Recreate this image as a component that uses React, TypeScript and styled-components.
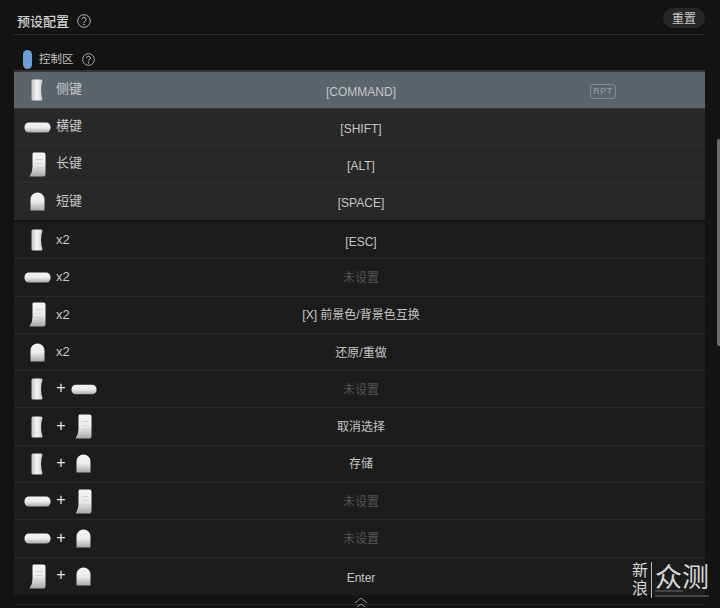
import * as React from 'react';
import styled, {createGlobalStyle} from 'styled-components';

const GlobalStyle = createGlobalStyle`
    html, body {
        margin: 0;
        padding: 0;
        background: #131313;
    }
    body {
        font-family: "Liberation Sans", "Noto Sans CJK SC", sans-serif;
    }
`;

const Page = styled.div`
    position: relative;
    width: 720px;
    height: 608px;
    overflow: hidden;
    padding: 0 15px 0 14px;
    box-sizing: border-box;
    background: #131313;
`;

const Header = styled.div`
    display: flex;
    align-items: center;
    height: 35px;
    padding: 7px 0 0 3px;
    box-sizing: border-box;
    border-bottom: 1px solid #2b2b2b;
`;

const Title = styled.div`
    font-size: 13px;
    font-weight: 500;
    color: #d4d4d4;
    margin-right: 8px;
`;

const ResetButton = styled.div`
    margin-left: auto;
    width: 42px;
    height: 20px;
    border-radius: 10px;
    background: #272727;
    color: #c8c8c8;
    font-size: 12px;
    display: flex;
    align-items: center;
    justify-content: center;
    margin-top: -6px;
`;

const SubHeader = styled.div`
    display: flex;
    align-items: center;
    height: 35px;
    padding: 13px 0 0 9px;
    box-sizing: border-box;
`;

const ZonePill = styled.div`
    width: 9px;
    height: 19px;
    border-radius: 4.5px;
    background: #6b9fd6;
    margin-right: 7px;
`;

const ZoneName = styled.div`
    font-size: 11.5px;
    color: #c4c4c4;
    margin-right: 8px;
    margin-top: -2px;
`;

const Group = styled.div<{$primary?: boolean}>`
    display: flex;
    flex-direction: column;
    background: ${({$primary}) => ($primary ? '#282828' : '#1c1c1c')};
    border-top: ${({$primary}) => ($primary ? '2px solid #333' : '2px solid #141414')};
`;

const Row = styled.div<{$active?: boolean; $separator: string; $height: number}>`
    display: grid;
    grid-template-columns: 230px 1fr 230px;
    align-items: center;
    height: ${({$height}) => $height}px;
    box-sizing: border-box;
    background: ${({$active}) => ($active ? '#5a6569' : 'transparent')};
    border-bottom: 1px solid ${({$separator}) => $separator};
    &:last-child {
        border-bottom: none;
    }
`;

const Trigger = styled.div`
    display: flex;
    align-items: center;
    height: 100%;
`;

const KeySlot = styled.div`
    width: 42px;
    padding-left: 4px;
    box-sizing: border-box;
    display: flex;
    justify-content: center;
    flex: none;
`;

const Label = styled.div<{$lift: number}>`
    padding-bottom: ${({$lift}) => $lift}px;
    font-size: 13px;
    color: #c9c9c9;
`;

const Plus = styled.div`
    font-size: 16px;
    width: 10px;
    text-align: center;
    color: #e4e4e4;
    line-height: 16px;
    margin-top: -2px;
    margin-right: 5px;
`;

const SecondKey = styled.div<{$narrow: boolean}>`
    width: 26px;
    box-sizing: border-box;
    padding-right: ${({$narrow}) => ($narrow ? 2 : 0)}px;
    display: flex;
    justify-content: center;
`;

const Action = styled.div<{$empty?: boolean; $latin?: boolean}>`
    text-align: center;
    padding: ${({$latin}) => ($latin ? '3px 0 0 3px' : '0 0 2px 3px')};
    font-size: 12px;
    color: ${({$empty}) => ($empty ? '#555' : '#c6c6c6')};
`;

const Flags = styled.div`
    padding: 2px 0 0 115px;
`;

const Repeat = styled.span`
    display: block;
    width: 26px;
    height: 15px;
    line-height: 13px;
    box-sizing: border-box;
    border: 1px solid #838c90;
    border-radius: 3px;
    text-align: center;
    font-size: 9px;
    letter-spacing: 0.5px;
    color: #98a1a4;
`;

const Footer = styled.div`
    height: 14px;
    position: relative;
`;

const FooterLine = styled.div`
    position: absolute;
    left: 1px;
    right: 0;
    top: 9px;
    height: 1px;
    background: #2b2b2b;
`;

const Chevron = styled.svg`
    position: absolute;
    left: 340px;
    top: 2px;
`;

const Scrollbar = styled.div`
    position: absolute;
    right: 0;
    top: 139px;
    width: 3px;
    height: 207px;
    border-radius: 2px 0 0 2px;
    background: #6c6c6c;
`;

const Watermark = styled.div`
    position: absolute;
    left: 632px;
    top: 562px;
    display: flex;
    color: #d8d8d8;
`;

const BrandSmall = styled.div`
    width: 17px;
    font-size: 16px;
    line-height: 18px;
    border-right: 1px solid #bbb;
    padding-right: 2px;
    height: 36px;
`;

const BrandLarge = styled.div`
    position: relative;
    margin-left: 3px;
    padding-top: 3px;
    font-size: 27px;
    line-height: 27px;
    white-space: nowrap;
    width: 54px;
    height: 30px;
    border-bottom: 2px solid #444;
    &::after {
        content: '';
        position: absolute;
        left: 0;
        bottom: 3px;
        width: 28px;
        height: 2px;
        background: #444;
    }
`;

const HelpIcon = ({size}: {size: number}) => (
    <svg width={size} height={size} viewBox="0 0 14 14">
        <circle cx="7" cy="7" r="6.3" fill="none" stroke="#c4c4c4" strokeWidth="0.9" />
        <path d="M5 5.4a2 2 0 1 1 3.1 1.7c-.7.4-1.1.8-1.1 1.6" fill="none" stroke="#d0d0d0" strokeWidth="1" />
        <circle cx="7" cy="10.5" r="0.7" fill="#d0d0d0" />
    </svg>
);

const KeyGradient = ({id, horizontal}: {id: string; horizontal?: boolean}) => (
    <defs>
        <linearGradient id={id} x1="0" y1="0" x2={horizontal ? '1' : '0'} y2={horizontal ? '0' : '1'}>
            <stop offset="0" stopColor={horizontal ? '#c4c4c4' : '#f4f4f4'} />
            <stop offset="0.5" stopColor={horizontal ? '#f5f5f5' : '#ececec'} />
            <stop offset="1" stopColor={horizontal ? '#c8c8c8' : '#a9a9a9'} />
        </linearGradient>
    </defs>
);

type KeyKind = 'side' | 'wide' | 'long' | 'short';

const Key = ({kind}: {kind: KeyKind}) => {
    if (kind === 'side') {
        return (
            <svg width="12" height="22" viewBox="0 0 12 22">
                <KeyGradient id="side-key" horizontal />
                <path d="M2 .5H10Q11.5.5 11.5 2Q10 6 10 11Q10 16 11.5 20Q11.5 21.5 10 21.5H2Q.5 21.5.5 20V2Q.5.5 2 .5Z" fill="url(#side-key)" />
            </svg>
        );
    }
    if (kind === 'wide') {
        return (
            <svg width="27" height="11" viewBox="0 0 27 11">
                <KeyGradient id="wide-key" />
                <rect x="0.5" y="0.5" width="26" height="10" rx="4.5" fill="url(#wide-key)" />
            </svg>
        );
    }
    if (kind === 'long') {
        return (
            <svg width="17" height="25" viewBox="0 0 17 25">
                <KeyGradient id="long-key" />
                <path d="M4.5.5H14.5Q16.5.5 16.5 2.5V22.5Q16.5 24.5 14.5 24.5H.5Q3.5 20 3.5 15V2Q3.5.5 4.5.5Z" fill="url(#long-key)" />
                <path d="M6.5 7.5H13.5M6.5 11.5H13.5M6.5 15.5H13.5" stroke="#d2d2d2" strokeWidth="1" />
            </svg>
        );
    }
    return (
        <svg width="15" height="19" viewBox="0 0 15 19">
            <KeyGradient id="short-key" />
            <path d="M.5 18.5V7.5A7 7 0 0 1 14.5 7.5V18.5Z" fill="url(#short-key)" />
        </svg>
    );
};

interface Binding {
    key: KeyKind;
    label?: string;
    second?: KeyKind;
    action?: string;
    repeat?: boolean;
    latin?: boolean;
}

const primary: Binding[] = [
    {key: 'side', label: '侧键', action: '[COMMAND]', repeat: true, latin: true},
    {key: 'wide', label: '横键', action: '[SHIFT]', latin: true},
    {key: 'long', label: '长键', action: '[ALT]', latin: true},
    {key: 'short', label: '短键', action: '[SPACE]', latin: true},
];

const secondary: Binding[] = [
    {key: 'side', label: 'x2', action: '[ESC]', latin: true},
    {key: 'wide', label: 'x2'},
    {key: 'long', label: 'x2', action: '[X] 前景色/背景色互换'},
    {key: 'short', label: 'x2', action: '还原/重做'},
    {key: 'side', second: 'wide'},
    {key: 'side', second: 'long', action: '取消选择'},
    {key: 'side', second: 'short', action: '存储'},
    {key: 'wide', second: 'long'},
    {key: 'wide', second: 'short'},
    {key: 'long', second: 'short', action: 'Enter', latin: true},
];

const BindingRow = ({binding, active, separator, height, lift}: {binding: Binding; active?: boolean; separator: string; height: number; lift: number}) => (
    <Row $active={active} $separator={separator} $height={height}>
        <Trigger>
            <KeySlot>
                <Key kind={binding.key} />
            </KeySlot>
            {binding.label && <Label $lift={lift}>{binding.label}</Label>}
            {binding.second && <Plus>+</Plus>}
            {binding.second && (
                <SecondKey $narrow={binding.second !== 'wide'}>
                    <Key kind={binding.second} />
                </SecondKey>
            )}
        </Trigger>
        <Action $empty={!binding.action} $latin={binding.latin}>{binding.action || '未设置'}</Action>
        <Flags>{binding.repeat && <Repeat>RPT</Repeat>}</Flags>
    </Row>
);

const App: React.FC = () => (
    <Page>
        <GlobalStyle />
        <Header>
            <Title>预设配置</Title>
            <HelpIcon size={14} />
            <ResetButton>重置</ResetButton>
        </Header>
        <SubHeader>
            <ZonePill />
            <ZoneName>控制区</ZoneName>
            <HelpIcon size={13} />
        </SubHeader>
        <Group $primary>
            {primary.map((binding, index) => (
                <BindingRow
                    key={index}
                    binding={binding}
                    active={index === 0}
                    separator={index === 0 ? '#3a3a3a' : '#323232'}
                    height={37}
                    lift={5}
                />
            ))}
        </Group>
        <Group>
            {secondary.map((binding, index) => (
                <BindingRow key={index} binding={binding} separator="#2a2a2a" height={37.3} lift={1} />
            ))}
        </Group>
        <Footer>
            <FooterLine />
            <Chevron width="14" height="12" viewBox="0 0 14 12">
                <path d="M1 6L7 1L13 6M3 10L7 7L11 10" fill="none" stroke="#9a9a9a" strokeWidth="1" />
            </Chevron>
        </Footer>
        <Scrollbar />
        <Watermark>
            <BrandSmall>新浪</BrandSmall>
            <BrandLarge>众测</BrandLarge>
        </Watermark>
    </Page>
);

export default App;
